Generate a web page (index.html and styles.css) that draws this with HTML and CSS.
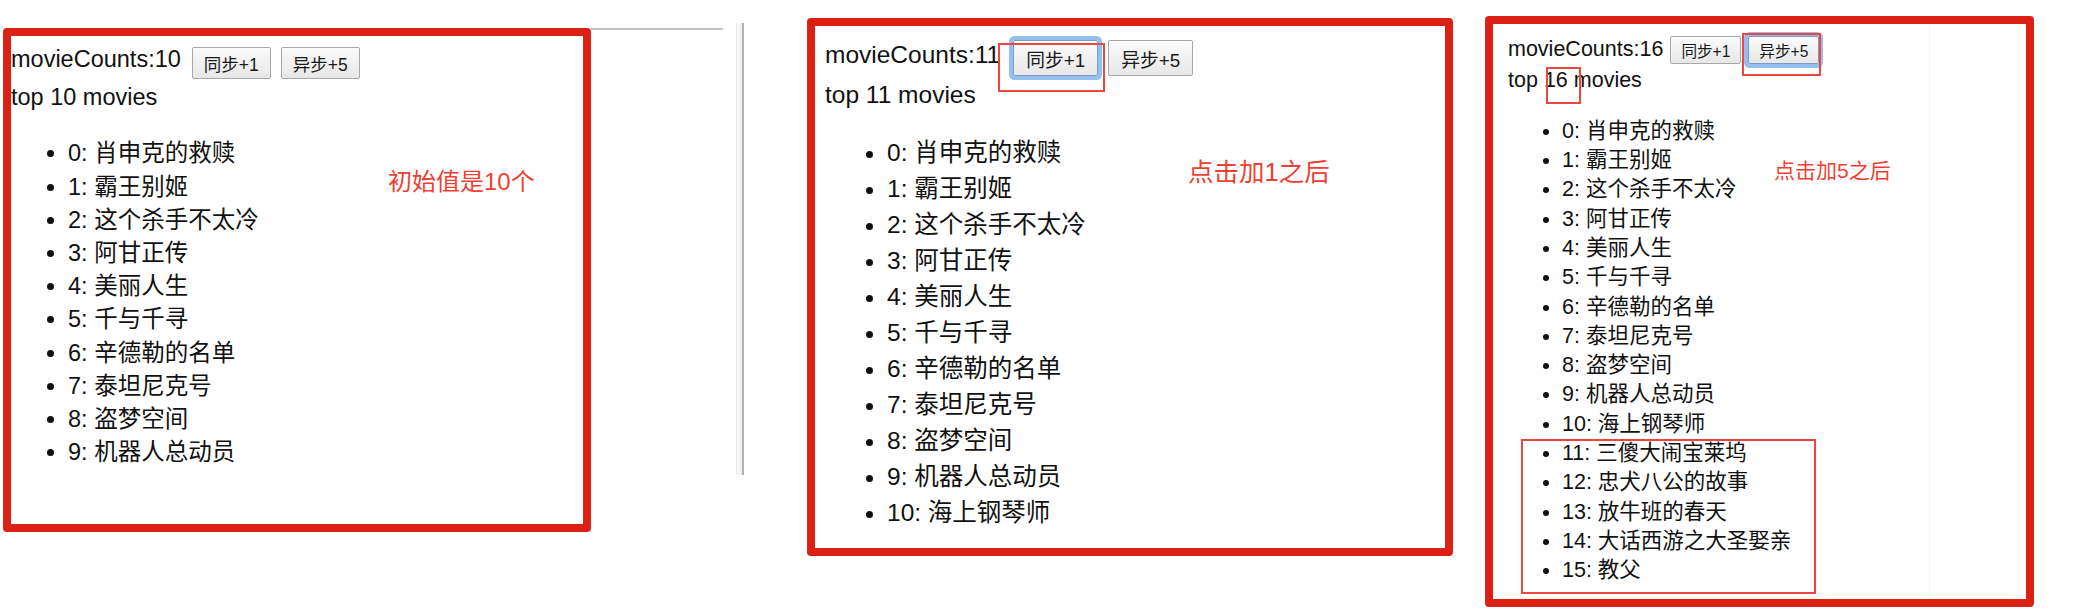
FILE: index.html
```html
<!DOCTYPE html>
<html lang="zh-CN">
<head>
<meta charset="utf-8">
<title>movieCounts</title>
<link rel="stylesheet" href="styles.css">
</head>
<body>
<main class="canvas">
  <section class="shot shot-1">
    <div class="page">
      <div class="counts">
        <span class="label">movieCounts:10</span>
        <button class="btn">同步+1</button>
        <button class="btn">异步+5</button>
      </div>
      <div class="top">top 10 movies</div>
      <ul class="movies">
        <li>0: 肖申克的救赎</li>
        <li>1: 霸王别姬</li>
        <li>2: 这个杀手不太冷</li>
        <li>3: 阿甘正传</li>
        <li>4: 美丽人生</li>
        <li>5: 千与千寻</li>
        <li>6: 辛德勒的名单</li>
        <li>7: 泰坦尼克号</li>
        <li>8: 盗梦空间</li>
        <li>9: 机器人总动员</li>
      </ul>
    </div>
    <p class="note">初始值是10个</p>
  </section>
  <div class="frame-edge"></div>
  <div class="scrollbar"></div>

  <section class="shot shot-2">
    <div class="page">
      <div class="counts">
        <span class="label">movieCounts:11</span>
        <span class="marked"><button class="btn focused">同步+1</button></span>
        <button class="btn">异步+5</button>
      </div>
      <div class="top">top 11 movies</div>
      <ul class="movies">
        <li>0: 肖申克的救赎</li>
        <li>1: 霸王别姬</li>
        <li>2: 这个杀手不太冷</li>
        <li>3: 阿甘正传</li>
        <li>4: 美丽人生</li>
        <li>5: 千与千寻</li>
        <li>6: 辛德勒的名单</li>
        <li>7: 泰坦尼克号</li>
        <li>8: 盗梦空间</li>
        <li>9: 机器人总动员</li>
        <li>10: 海上钢琴师</li>
      </ul>
    </div>
    <p class="note">点击加1之后</p>
  </section>

  <section class="shot shot-3">
    <div class="page">
      <div class="counts">
        <span class="label">movieCounts:16</span>
        <button class="btn">同步+1</button>
        <span class="marked"><button class="btn focused">异步+5</button></span>
      </div>
      <div class="top">top <span class="num-mark">16</span> movies</div>
      <ul class="movies">
        <li>0: 肖申克的救赎</li>
        <li>1: 霸王别姬</li>
        <li>2: 这个杀手不太冷</li>
        <li>3: 阿甘正传</li>
        <li>4: 美丽人生</li>
        <li>5: 千与千寻</li>
        <li>6: 辛德勒的名单</li>
        <li>7: 泰坦尼克号</li>
        <li>8: 盗梦空间</li>
        <li>9: 机器人总动员</li>
        <li>10: 海上钢琴师</li>
      </ul>
      <ul class="movies added">
        <li>11: 三傻大闹宝莱坞</li>
        <li>12: 忠犬八公的故事</li>
        <li>13: 放牛班的春天</li>
        <li>14: 大话西游之大圣娶亲</li>
        <li>15: 教父</li>
      </ul>
    </div>
    <p class="note">点击加5之后</p>
  </section>
</main>
</body>
</html>
```

FILE: styles.css
```css
* { box-sizing: border-box; }

html, body {
  margin: 0;
  padding: 0;
  background: #fff;
}

body {
  width: 2082px;
  height: 612px;
  overflow: hidden;
  font-family: "Liberation Sans", "Noto Sans CJK SC", sans-serif;
  color: #111;
}

.canvas {
  display: flex;
  align-items: flex-start;
}

/* screenshot frames with thick red annotation border */
.shot {
  position: relative;
  flex: none;
  border: 8px solid #dc2114;
  border-radius: 4px;
  background: #fff;
  overflow: hidden;
}

.shot-1 { margin: 28px 0 0 3px; width: 588px; height: 504px; }
.shot-2 { margin: 18px 0 0 63px; width: 646px; height: 538px; }
.shot-3 {
  margin: 16px 0 0 32px;
  width: 549px;
  height: 591px;
  background: linear-gradient(to right, #fff 436px, #f3f3f3 436px, #f3f3f3 437px, #fff 437px);
}

.frame-edge {
  flex: none;
  width: 132px;
  margin-top: 28px;
  border-top: 2px solid #c2c2c2;
}

.scrollbar {
  flex: none;
  width: 8px;
  height: 452px;
  margin: 23px 0 0 13px;
  background: linear-gradient(to right, #fbfbfb, #ececec);
  border-left: 1px solid #e6e6e6;
  border-right: 2px solid #b3b3b3;
}

/* page content */
.counts {
  display: flex;
  align-items: flex-start;
}

.label { white-space: nowrap; }

.btn {
  display: flex;
  align-items: center;
  justify-content: center;
  margin: 0;
  font-family: "Liberation Sans", "Noto Sans CJK SC", sans-serif;
  color: #1a1a1a;
  background: linear-gradient(#fbfbfb, #e7e7e7);
  border: 1px solid #a8a8a8;
  border-radius: 2px;
  white-space: nowrap;
}

.btn.focused {
  box-shadow: 0 0 0 4px #93c0f0;
  border-color: #7d9cc4;
}

.marked { position: relative; display: flex; }
.marked::after {
  content: "";
  position: absolute;
  border: 2px solid #e8483d;
  pointer-events: none;
}

.movies {
  margin: 0;
  list-style: disc;
}

.note {
  position: absolute;
  margin: 0;
  color: #ef3f33;
  white-space: nowrap;
  font-family: "Liberation Sans", "Noto Sans CJK SC", sans-serif;
}

/* panel 1 */
.shot-1 .page { padding: 11px 0 0 0; font-size: 23.5px; }
.shot-1 .label { line-height: 23.5px; margin: 1px 11px 0 0; }
.shot-1 .btn { height: 32px; padding: 0 11px; font-size: 17.5px; margin-right: 10px; }
.shot-1 .top { line-height: 30px; margin-top: 3px; }
.shot-1 .movies { margin-top: 25.4px; padding-left: 57px; }
.shot-1 .movies li { line-height: 33.2px; }
.shot-1 .note { left: 377px; top: 134px; font-size: 24px; line-height: 24px; }

/* panel 2 */
.shot-2 .page { padding: 14px 0 0 10px; font-size: 24.5px; }
.shot-2 .label { line-height: 24.5px; margin: 3.3px 13px 0 0; }
.shot-2 .btn { height: 36px; padding: 0 12px; font-size: 18.8px; }
.shot-2 .marked { margin-right: 10px; }
.shot-2 .marked::after { left: -15px; right: -7px; top: 3px; bottom: -16px; }
.shot-2 .top { line-height: 30px; margin-top: 3.5px; }
.shot-2 .movies { margin-top: 25.5px; padding-left: 62px; }
.shot-2 .movies li { line-height: 36px; }
.shot-2 .note { left: 373px; top: 134px; font-size: 25.5px; line-height: 25.5px; }

/* panel 3 */
.shot-3 .page { padding: 12px 0 0 15px; font-size: 21.5px; }
.shot-3 .label { line-height: 21.5px; margin: 2.8px 7px 0 0; }
.shot-3 .btn { height: 28px; padding: 0 10px; font-size: 15.6px; }
.shot-3 .counts > .btn { margin-right: 7px; }
.shot-3 .marked::after { left: -6px; right: -2px; top: -3px; bottom: -12px; }
.shot-3 .top { line-height: 26px; margin-top: 2.5px; }
.shot-3 .num-mark { position: relative; }
.shot-3 .num-mark::after {
  content: "";
  position: absolute;
  left: 2px;
  width: 31px;
  top: -0.5px;
  bottom: -12px;
  border: 2px solid #e8483d;
}
.shot-3 .movies { margin-top: 24.3px; padding-left: 54px; }
.shot-3 .movies.added { margin-top: 0; position: relative; }
.shot-3 .movies.added::before {
  content: "";
  position: absolute;
  left: 13px;
  width: 291px;
  top: 0;
  bottom: -8px;
  border: 2px solid #e8483d;
}
.shot-3 .movies li { line-height: 29.3px; }
.shot-3 .note { left: 281px; top: 135.5px; font-size: 21px; line-height: 21px; }
```
